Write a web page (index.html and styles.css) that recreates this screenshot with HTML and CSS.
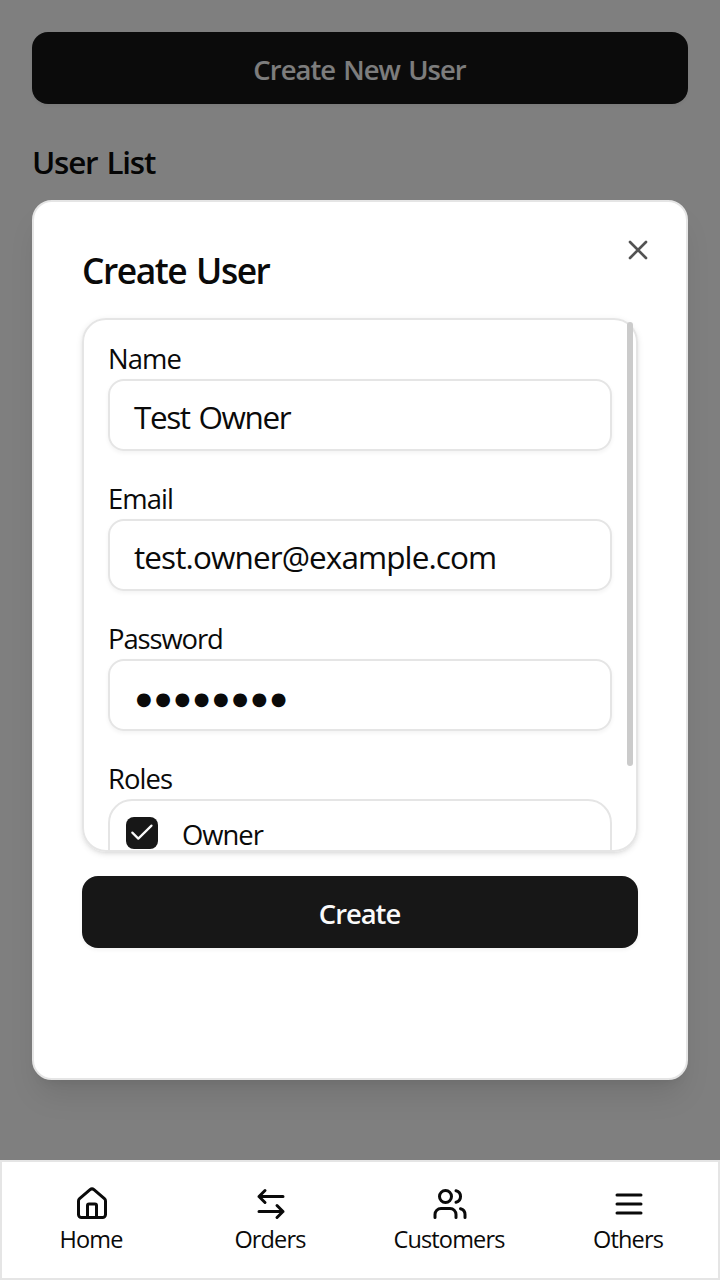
FILE: index.html
```html
<!DOCTYPE html>
<html lang="en">
<head>
<meta charset="utf-8">
<title>Create User</title>
<link rel="stylesheet" href="styles.css">
</head>
<body>
<div class="screen">
  <main class="page">
    <button class="button button-wide">Create New User</button>
    <h1 class="page-title">User List</h1>
  </main>
  <div class="overlay">
    <section class="dialog">
      <button class="close" aria-label="Close">
        <svg class="close-icon" viewBox="0 0 24 24"><path d="M18 6 6 18M6 6l12 12"/></svg>
      </button>
      <h2 class="dialog-title">Create User</h2>
      <div class="form-area">
        <div class="form-card">
          <div class="field">
            <span class="label">Name</span>
            <div class="input">Test Owner</div>
          </div>
          <div class="field">
            <span class="label">Email</span>
            <div class="input input-email">test.owner@example.com</div>
          </div>
          <div class="field">
            <span class="label label-password">Password</span>
            <div class="input"><span class="dots">●●●●●●●●</span></div>
          </div>
          <div class="field">
            <span class="label">Roles</span>
            <div class="roles">
              <span class="checkbox"><svg class="check-icon" viewBox="0 0 32 32"><path d="m6.3 15.6 6 6L25.5 8.6"/></svg></span>
              <span class="role">Owner</span>
            </div>
          </div>
        </div>
        <span class="scrollbar"></span>
      </div>
      <button class="button">Create</button>
    </section>
  </div>
  <nav class="nav">
    <a class="nav-item"><svg class="icon" viewBox="0 0 24 24"><path d="M15 21v-8a1 1 0 0 0-1-1h-4a1 1 0 0 0-1 1v8"/><path d="M3 10a2 2 0 0 1 .709-1.528l7-5.999a2 2 0 0 1 2.582 0l7 5.999A2 2 0 0 1 21 10v9a2 2 0 0 1-2 2H5a2 2 0 0 1-2-2z"/></svg><span class="nav-label">Home</span></a>
    <a class="nav-item"><svg class="icon" viewBox="0 0 24 24"><path d="M8 3 4 7l4 4M4 7h16M16 21l4-4-4-4M20 17H4"/></svg><span class="nav-label">Orders</span></a>
    <a class="nav-item"><svg class="icon" viewBox="0 0 24 24"><path d="M16 21v-2a4 4 0 0 0-4-4H6a4 4 0 0 0-4 4v2"/><circle cx="9" cy="7" r="4"/><path d="M22 21v-2a4 4 0 0 0-3-3.87M16 3.13a4 4 0 0 1 0 7.75"/></svg><span class="nav-label">Customers</span></a>
    <a class="nav-item"><svg class="icon" viewBox="0 0 24 24"><path d="M4 12h16M4 6h16M4 18h16"/></svg><span class="nav-label">Others</span></a>
  </nav>
</div>
</body>
</html>
```
FILE: styles.css
```css
* { box-sizing: border-box; }
body { margin: 0; color: #0a0a0a; font-family: "Open Sans", "Noto Sans", sans-serif; }
svg { display: block; fill: none; stroke: currentColor; stroke-width: 2; stroke-linecap: round; stroke-linejoin: round; }
.screen { position: relative; width: 720px; height: 1280px; overflow: hidden; background: #fff; display: flex; flex-direction: column; }
.page { flex: 1; padding: 32px; }
.button { display: flex; align-items: center; justify-content: center; width: 100%; height: 72px; padding: 4px 1px 0 0; border: 0; border-radius: 16px; background: #171717; color: #fafafa; font-family: inherit; font-size: 27.4px; font-weight: 600; line-height: 40px; letter-spacing: -1px; white-space: nowrap; box-shadow: 0 2px 4px rgba(0,0,0,.05); }
.button-wide { letter-spacing: -0.95px; word-spacing: 2px; }
.page-title { margin: 34px 0 0; font-size: 31.4px; line-height: 48px; font-weight: 600; letter-spacing: -1.2px; word-spacing: 2px; }
.overlay { position: absolute; inset: 0; padding: 200px 32px; background: rgba(0,0,0,.5); }
.dialog { position: relative; height: 880px; padding: 44px 48px; border: 2px solid #e5e5e5; border-radius: 20px; background: #fff; box-shadow: 0 20px 30px -6px rgba(0,0,0,.1), 0 8px 12px -8px rgba(0,0,0,.1); }
.close { position: absolute; top: 32px; right: 32px; padding: 0; border: 0; background: none; color: #535353; }
.close-icon { width: 32px; height: 32px; }
.dialog-title { margin: 0 0 24px; font-size: 35.4px; line-height: 48px; font-weight: 600; letter-spacing: -1.45px; word-spacing: 2px; }
.form-area { position: relative; margin-bottom: 24px; }
.form-card { height: 534px; padding: 19px 24px; overflow: hidden; border: 2px solid #e5e5e5; border-radius: 24px; box-shadow: 0 2px 6px rgba(0,0,0,.1), 0 2px 4px -2px rgba(0,0,0,.1); }
.field { height: 140px; }
.label { display: block; font-size: 27.4px; line-height: 40px; letter-spacing: -0.9px; }
.label-password { letter-spacing: -1.1px; }
.input { display: flex; align-items: center; height: 72px; padding: 2px 24px 0; border: 2px solid #e5e5e5; border-radius: 16px; font-size: 31.5px; letter-spacing: -1.4px; word-spacing: 2px; box-shadow: 0 2px 4px rgba(0,0,0,.05); white-space: nowrap; }
.input-email { letter-spacing: -0.9px; }
.dots { padding: 4px 0 0 2px; font-family: "DejaVu Sans", sans-serif; font-size: 18px; letter-spacing: 3.55px; }
.roles { display: flex; gap: 24px; height: 160px; padding: 16px; border: 2px solid #e5e5e5; border-radius: 24px; }
.checkbox { width: 32px; height: 32px; border-radius: 8px; background: #171717; color: #fafafa; }
.check-icon { width: 32px; height: 32px; stroke-width: 2.2; }
.role { font-size: 27.4px; line-height: 36px; letter-spacing: -1px; }
.scrollbar { position: absolute; top: 4px; right: 5px; width: 6px; height: 444px; border-radius: 3px; background: #cbcbcb; }
.nav { position: relative; display: grid; grid-template-columns: repeat(4, 1fr); height: 120px; padding-top: 24px; border: 2px solid #e5e5e5; background: #fff; }
.nav-item { display: flex; flex-direction: column; align-items: center; font-size: 23.5px; line-height: 34px; }
.nav-label { margin-right: 1px; letter-spacing: -0.85px; }
.icon { width: 36px; height: 36px; }
```
